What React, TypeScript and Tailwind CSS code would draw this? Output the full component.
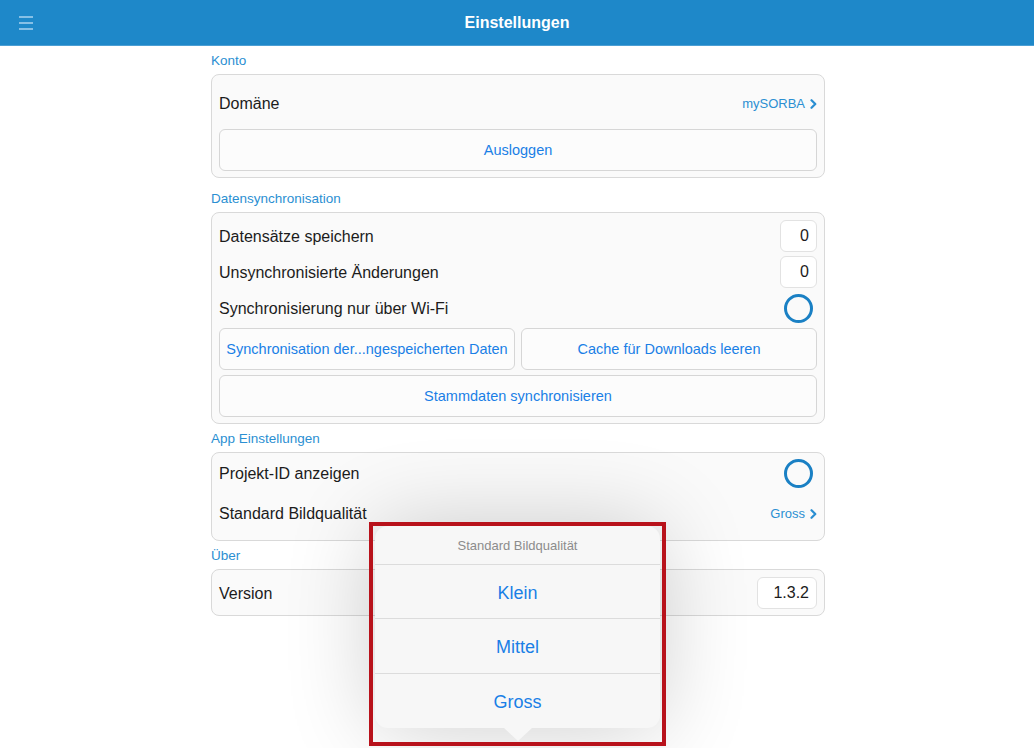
import React from 'react';

const font = { fontFamily: '"Liberation Sans", Arial, sans-serif' };

const Chevron: React.FC = () => (
  <svg width="7" height="10" viewBox="0 0 7 10" className="ml-[5px]">
    <path d="M1.5 1.2 L5.3 5 L1.5 8.8" fill="none" stroke="currentColor" strokeWidth="2.2" strokeLinecap="round" strokeLinejoin="round" />
  </svg>
);

const Label: React.FC<{ text: string; className?: string }> = ({ text, className }) => (
  <div className={`h-[16px] leading-[18px] text-[13.5px] text-[#2b8fd2] mb-[6px] ${className || ''}`}>{text}</div>
);

const Card: React.FC<{ className?: string; children: React.ReactNode }> = ({ className, children }) => (
  <div className={`border border-[#d9d9d9] rounded-[8px] bg-[#fafafa] px-[7px] flex flex-col ${className || ''}`}>{children}</div>
);

const Row: React.FC<{ label: string; h: string; children?: React.ReactNode }> = ({ label, h, children }) => (
  <div className={`flex items-center justify-between ${h}`}>
    <span className="text-[16px] text-[#1c1c1c] pt-[1px]">{label}</span>
    {children}
  </div>
);

const Btn: React.FC<{ text: string; className?: string }> = ({ text, className }) => (
  <button className={`h-[42px] pt-[2px] border border-[#d6d6d6] rounded-[6px] bg-[#fcfcfc] text-[14.5px] text-[#1a7fe6] whitespace-nowrap ${className || ''}`}>{text}</button>
);

const NumBox: React.FC<{ value: string; w: string }> = ({ value, w }) => (
  <div className={`h-[32px] ${w} border border-[#e2e2e2] rounded-[6px] bg-white flex items-center justify-end px-[7px] text-[16px] text-[#1c1c1c]`}>{value}</div>
);

const Toggle: React.FC = () => (
  <div className="w-[29px] h-[29px] rounded-full border-[3px] border-[#1a80c4] mr-[4px]" />
);

const LinkValue: React.FC<{ text: string }> = ({ text }) => (
  <span className="flex items-center text-[13px] text-[#2b8fd2] pt-[1px]">
    {text}
    <Chevron />
  </span>
);

const Option: React.FC<{ text: string; h: string; last?: boolean }> = ({ text, h, last }) => (
  <div className={`${h} pt-[3px] flex items-center justify-center text-[18px] text-[#1a7fe6] ${last ? '' : 'border-b border-[#dcdcdc]'}`}>{text}</div>
);

export default function App() {
  return (
    <div className="relative min-h-[748px] bg-white overflow-hidden" style={font}>
      <header className="h-[46px] bg-[#1e88c9] border-b border-[#4c9fd4] flex items-center relative">
        <div className="absolute left-[19px] top-[16px] flex flex-col gap-[4px]">
          <div className="w-[14px] h-[2px] bg-[#86c0e6]" />
          <div className="w-[14px] h-[2px] bg-[#86c0e6]" />
          <div className="w-[14px] h-[2px] bg-[#86c0e6]" />
        </div>
        <h1 className="flex-1 text-center text-white text-[16px] font-bold pt-[1px]">Einstellungen</h1>
      </header>

      <main className="w-[616px] mx-auto pt-[6px] pl-[2px]">
        <Label text="Konto" />
        <Card className="pt-[6px] pb-[6px] gap-[4px]">
          <Row label="Domäne" h="h-[44px]">
            <LinkValue text="mySORBA" />
          </Row>
          <Btn text="Ausloggen" />
        </Card>

        <Label text="Datensynchronisation" className="mt-[12px]" />
        <Card className="pt-[5px] pb-[6px]">
          <Row label="Datensätze speichern" h="h-[36px]">
            <NumBox value="0" w="w-[37px]" />
          </Row>
          <Row label="Unsynchronisierte Änderungen" h="h-[36px]">
            <NumBox value="0" w="w-[37px]" />
          </Row>
          <Row label="Synchronisierung nur über Wi-Fi" h="h-[36px]">
            <Toggle />
          </Row>
          <div className="flex gap-[6px] mt-[2px]">
            <Btn text="Synchronisation der...ngespeicherten Daten" className="flex-1" />
            <Btn text="Cache für Downloads leeren" className="flex-1" />
          </div>
          <Btn text="Stammdaten synchronisieren" className="mt-[5px]" />
        </Card>

        <Label text="App Einstellungen" className="mt-[6px]" />
        <Card className="pt-[2px] pb-[5px]">
          <Row label="Projekt-ID anzeigen" h="h-[36px]">
            <Toggle />
          </Row>
          <Row label="Standard Bildqualität" h="h-[44px]">
            <LinkValue text="Gross" />
          </Row>
        </Card>

        <Label text="Über" className="mt-[6px]" />
        <Card className="pt-[7px] pb-[6px]">
          <Row label="Version" h="h-[32px]">
            <NumBox value="1.3.2" w="w-[60px]" />
          </Row>
        </Card>
      </main>

      {/* popover */}
      <div className="absolute left-[375px] top-[526px] w-[285px]">
        <div className="rounded-[13px] bg-[#f7f7f7] shadow-[0_0_90px_rgba(0,0,0,0.2)] flex flex-col">
          <div className="h-[39px] pt-[1px] flex items-center justify-center text-[13px] text-[#8c8c8c] border-b border-[#dcdcdc]">
            Standard Bildqualität
          </div>
          <Option text="Klein" h="h-[54px]" />
          <Option text="Mittel" h="h-[55px]" />
          <Option text="Gross" h="h-[54px]" last />
        </div>
        <svg width="28" height="13" viewBox="0 0 28 13" className="absolute left-[129px] top-[202px]">
          <path d="M0 0 L14 13 L28 0 Z" fill="#f7f7f7" />
        </svg>
      </div>

      {/* annotation frame */}
      <div className="absolute left-[369px] top-[522px] w-[297px] h-[224px] border-[4px] border-[#b8121b]" />
    </div>
  );
}
